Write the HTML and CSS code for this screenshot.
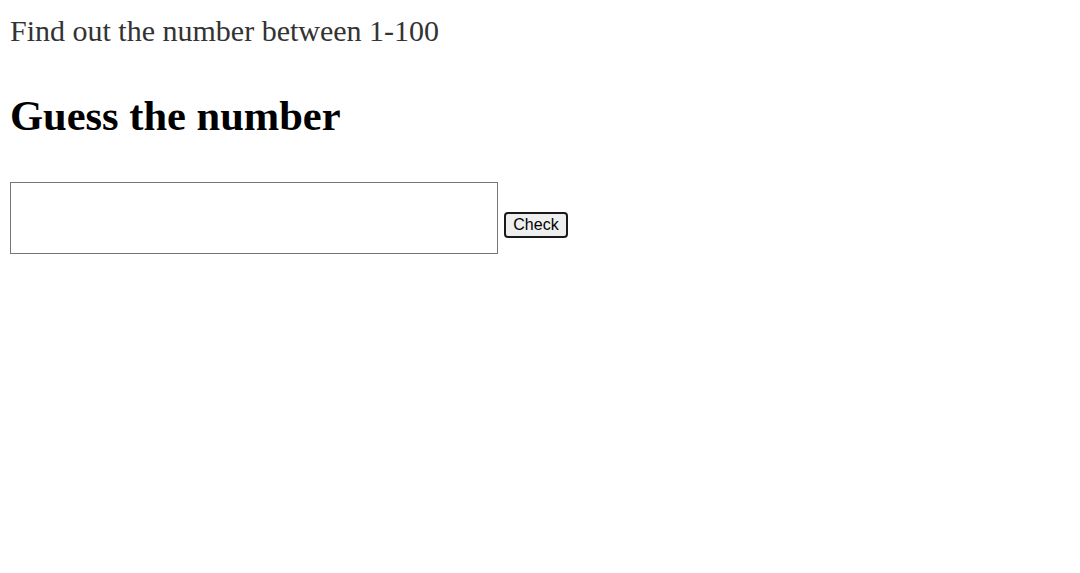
FILE: index.html
```html
<!DOCTYPE html>
<html lang="en">
<head>
<meta charset="utf-8">
<title>Guess the number</title>
<link rel="stylesheet" href="styles.css">
</head>
<body>
  <main class="page">
    <p class="hint">Find out the number between 1-100</p>
    <h1 class="title">Guess the number</h1>
    <form class="guess-row" onsubmit="return false">
      <input class="guess-input" type="text" aria-label="Your guess">
      <button class="check-btn" type="submit">Check</button>
    </form>
  </main>
</body>
</html>
```

FILE: styles.css
```css
html, body {
  margin: 0;
  padding: 0;
  background: #ffffff;
}

.page {
  padding: 14px 10px;
  font-family: "Liberation Serif", "Times New Roman", serif;
}

.hint {
  margin: 0;
  font-size: 30px;
  line-height: 34px;
  color: #333333;
}

.title {
  margin: 44px 0 0;
  font-size: 42.5px;
  line-height: 48px;
  font-weight: bold;
  color: #000000;
}

.guess-row {
  margin: 42px 0 0;
  display: flex;
  align-items: flex-start;
  gap: 6px;
}

.guess-input {
  box-sizing: border-box;
  width: 488px;
  height: 72px;
  margin: 0;
  border: 1px solid #767676;
  border-radius: 0;
  background: #ffffff;
  padding: 2px 4px;
  font-family: "Liberation Sans", Arial, sans-serif;
  font-size: 16px;
}

.check-btn {
  box-sizing: border-box;
  margin: 30px 0 0;
  width: 64px;
  height: 26px;
  padding: 2px 0;
  border: 2px solid #1a1a1a;
  border-radius: 4px;
  background: #efefef;
  color: #000000;
  font-family: "Liberation Sans", Arial, sans-serif;
  font-size: 16px;
  line-height: 18px;
  text-align: center;
}
```
